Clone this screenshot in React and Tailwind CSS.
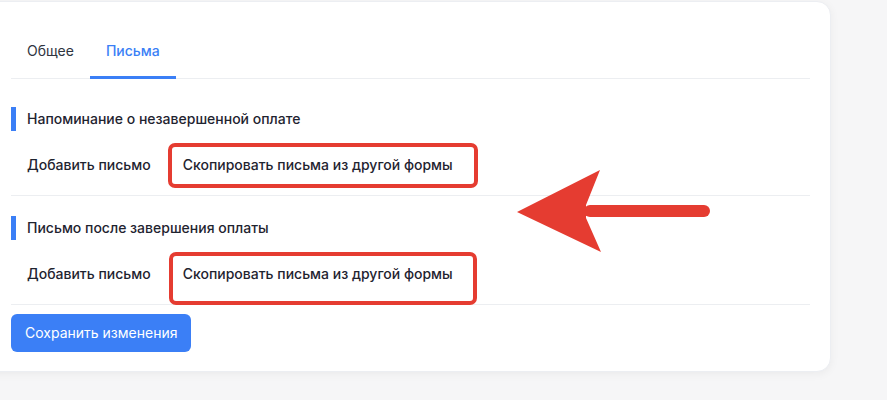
import React, { useState } from 'react';

// Настройки формы: вкладка «Письма» с разметкой (красные рамки и стрелка)

const sections = [
  { id: 'reminder', title: 'Напоминание о незавершенной оплате', box: 'left-[1px] -right-[9px] -top-[12px] -bottom-[13px]' },
  { id: 'done', title: 'Письмо после завершения оплаты', box: 'left-[2px] -right-[8px] -top-[12px] -bottom-[21px]' },
];

const Section = ({ title, box, first }) => (
  <div className={first ? 'pt-[28px]' : 'pt-[20px]'}>
    <div className="flex h-6 items-center">
      <span className="h-6 w-[5px] bg-[#3b7ff6]" />
      <h3 className="ml-[11px] text-[14px] font-medium leading-5 text-[#1f2430]">{title}</h3>
    </div>
    <div className="flex items-center border-b border-[#eceef1] pt-6 pb-5">
      <button className="px-4 text-[14px] font-medium leading-5 text-[#1f2430]">Добавить письмо</button>
      <button className="relative px-4 text-[14px] font-medium leading-5 text-[#1f2430]">
        Скопировать письма из другой формы
        <span className={`pointer-events-none absolute rounded-[7px] border-[4px] border-[#e53c31] ${box}`} />
      </button>
    </div>
  </div>
);

export default function App() {
  const [tab, setTab] = useState('letters');

  return (
    <div className="relative h-[400px] w-[887px] overflow-hidden bg-[#f6f6f7] font-['Inter','Noto_Sans',sans-serif]">
      <div className="ml-[-20px] mt-px w-[851px] rounded-[14px] border border-[#eceef2] bg-white pl-[30px] pr-5 pt-5 pb-[19px] shadow-[0_2px_10px_rgba(0,0,0,0.05)]">
        <div className="flex border-b border-[#eceef1]">
          {[
            { id: 'general', label: 'Общее' },
            { id: 'letters', label: 'Письма' },
          ].map((t) => (
            <button
              key={t.id}
              onClick={() => setTab(t.id)}
              className={
                tab === t.id
                  ? '-mb-px border-b-[3px] border-[#3b7ff6] px-4 pt-[19px] pb-[15px] text-[14px] font-medium leading-5 text-[#3b7ff6]'
                  : '-mb-px border-b-[3px] border-transparent px-4 pt-[19px] pb-[15px] text-[14px] leading-5 text-[#2f3440]'
              }
            >
              {t.label}
            </button>
          ))}
        </div>

        {sections.map((s, i) => (
          <Section key={s.id} title={s.title} box={s.box} first={i === 0} />
        ))}

        <button className="mt-[9px] h-[38px] rounded-[6px] bg-[#3b7ff6] px-[14px] text-[14px] leading-5 text-white">
          Сохранить изменения
        </button>
      </div>

      {/* стрелка-указатель */}
      <svg className="pointer-events-none absolute left-0 top-0" width="887" height="400" viewBox="0 0 887 400">
        <line x1="590" y1="211" x2="704" y2="211" stroke="#e53c31" strokeWidth="12" strokeLinecap="round" />
        <polygon points="517,212 600,170 586,205 586,218 601,252" fill="#e53c31" />
      </svg>
    </div>
  );
}
